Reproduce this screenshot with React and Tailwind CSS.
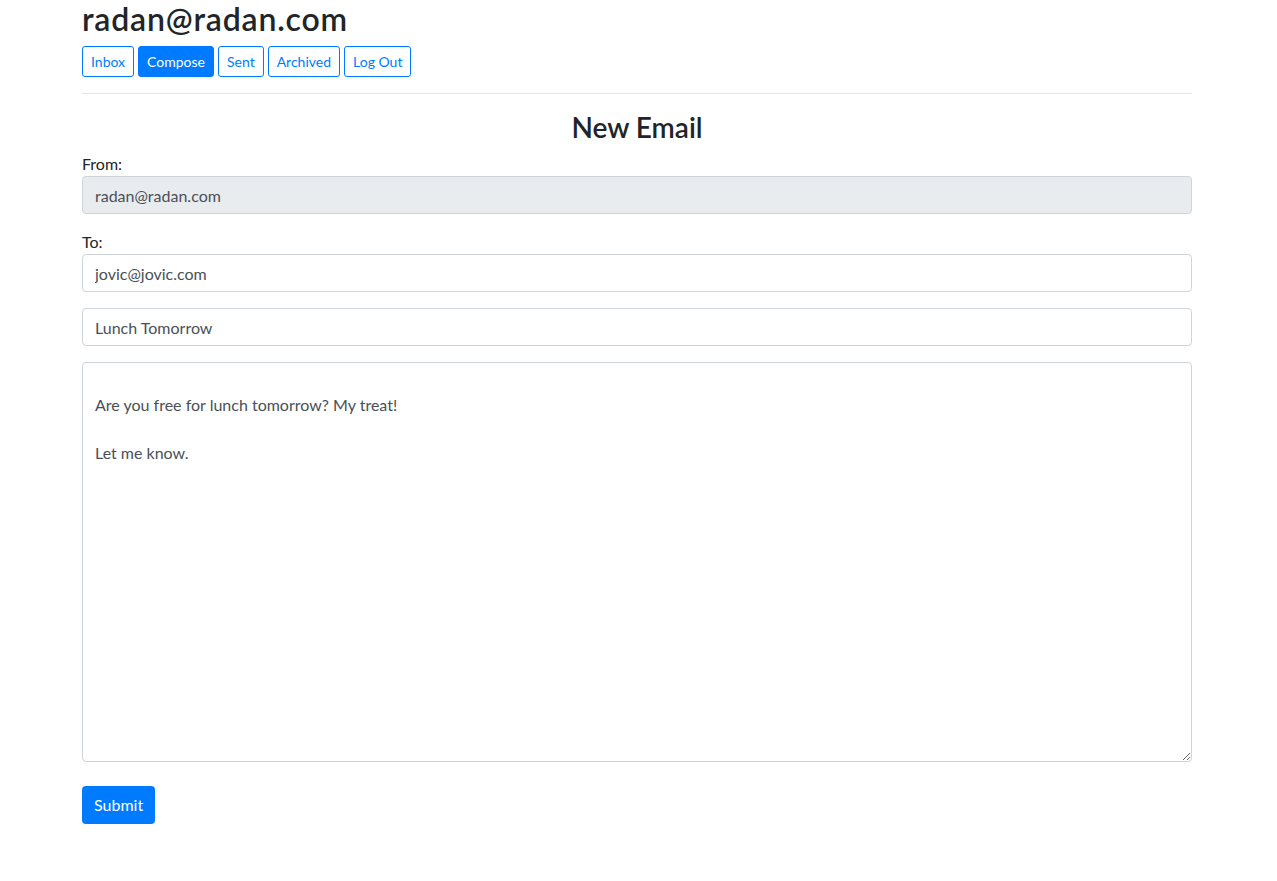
import React from "react";

const font = { fontFamily: 'Lato, "Noto Sans", sans-serif' };

export default function App() {
  const btn =
    "h-[31px] px-2 text-[14px] leading-[21px] rounded-[3px] border border-[#007bff]";
  return (
    <div className="min-h-[881px] bg-white text-[#212529] text-[16px]" style={font}>
      <div className="w-[1110px] ml-[82px]">
        <h2 className="text-[32px] leading-[38px] font-semibold tracking-[0.8px] mb-2">radan@radan.com</h2>
        <div className="flex gap-1">
          <button className={`${btn} text-[#007bff] bg-white`}>Inbox</button>
          <button className={`${btn} text-white bg-[#007bff]`}>Compose</button>
          <button className={`${btn} text-[#007bff] bg-white`}>Sent</button>
          <button className={`${btn} text-[#007bff] bg-white`}>Archived</button>
          <button className={`${btn} text-[#007bff] bg-white`}>Log Out</button>
        </div>
        <hr className="my-4 border-0 border-t border-[rgba(0,0,0,0.1)]" />
        <h3 className="text-[28px] leading-[34px] font-semibold text-center mb-2">New Email</h3>
        <form>
          <div className="mb-4">
            <div className="leading-6">From:</div>
            <input
              disabled
              value="radan@radan.com"
              readOnly
              className="block w-full h-[38px] px-3 rounded border border-[#ced4da] bg-[#e9ecef] text-[#495057] outline-none"
            />
          </div>
          <div className="mb-4">
            <div className="leading-6">To:</div>
            <input
              defaultValue="jovic@jovic.com"
              className="block w-full h-[38px] px-3 rounded border border-[#ced4da] bg-white text-[#495057] outline-none"
            />
          </div>
          <input
            defaultValue="Lunch Tomorrow"
            className="block w-full h-[38px] px-3 rounded border border-[#ced4da] bg-white text-[#495057] outline-none mb-4"
          />
          <textarea
            defaultValue={"\nAre you free for lunch tomorrow? My treat!\n\nLet me know."}
            className="block w-full h-[400px] px-3 py-[6px] leading-6 rounded border border-[#ced4da] bg-white text-[#495057] outline-none"
          />
          <button
            type="button"
            className="mt-6 h-[38px] px-3 rounded text-white bg-[#007bff] leading-6"
          >
            Submit
          </button>
        </form>
      </div>
    </div>
  );
}
